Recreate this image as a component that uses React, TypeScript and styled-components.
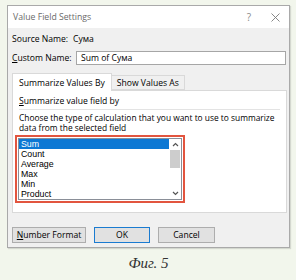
import styled, { createGlobalStyle } from 'styled-components';

const GlobalStyle = createGlobalStyle`
  body {
    margin: 0;
    background: #f2f6ec;
    font-family: 'Open Sans', 'Noto Sans', sans-serif;
  }
`;

const Page = styled.div`
  width: 296px;
  height: 280px;
  padding: 5px 0 0 7px;
  box-sizing: border-box;
`;

const Dialog = styled.div`
  width: 283px;
  border: 1px solid #a9a9a9;
  box-sizing: border-box;
  background: #f0f0f0;
  box-shadow: 1px 1px 1px rgba(0, 0, 0, 0.12);
`;

const TitleBar = styled.div`
  height: 22px;
  background: #ffffff;
  display: flex;
  align-items: center;
  padding: 0 0 0 5px;
  font-size: 8.7px;
  color: #6a6a6a;
`;

const Title = styled.span`
  flex: 1;
`;

const TitleGlyph = styled.span<{ width: number }>`
  width: ${(p) => p.width}px;
  display: flex;
  justify-content: center;
  color: #8a8a8a;
  font-size: 10px;
`;

const Body = styled.div`
  padding: 3px 3px 4px 4px;
  font-size: 8.6px;
  color: #000;
  white-space: nowrap;
`;

const Row = styled.div`
  height: 16px;
  display: flex;
  align-items: center;
  margin-bottom: 3px;
`;

const Label = styled.span<{ width: number }>`
  width: ${(p) => p.width}px;
  flex: none;
`;

const Input = styled.div`
  flex: 1;
  height: 14px;
  box-sizing: border-box;
  border: 1px solid #a6a6a6;
  background: #fff;
  display: flex;
  align-items: center;
  padding-left: 4px;
`;

const Tabs = styled.div`
  margin-top: 6px;
  height: 18px;
  display: flex;
  align-items: flex-end;
`;

const Tab = styled.div<{ active?: boolean }>`
  height: ${(p) => (p.active ? 18 : 15)}px;
  box-sizing: border-box;
  padding: 0 ${(p) => (p.active ? 6 : 5)}px;
  display: flex;
  align-items: center;
  background: ${(p) => (p.active ? '#ffffff' : '#f0f0f0')};
  border: 1px solid #d9d9d9;
  border-bottom: ${(p) => (p.active ? 'none' : '1px solid #d9d9d9')};
  margin-bottom: ${(p) => (p.active ? -1 : 0)}px;
  position: relative;
  z-index: ${(p) => (p.active ? 1 : 0)};
  & + & {
    border-left: none;
  }
`;

const Panel = styled.div`
  width: 275px;
  height: 123px;
  box-sizing: border-box;
  background: #fff;
  border: 1px solid #d9d9d9;
  padding: 5px 6px 0 6px;
`;

const Heading = styled.div`
  height: 11px;
  line-height: 11px;
  padding-bottom: 2px;
  border-bottom: 1px solid #e3e3e3;
`;

const Description = styled.div`
  margin-top: 3px;
  line-height: 10px;
  font-size: 8.4px;
`;

const Underlined = styled.span`
  text-decoration: underline;
`;

const Highlight = styled.div`
  margin: 2px 0 0 -4px;
  width: 170px;
  height: 68px;
  box-sizing: border-box;
  border: 2px solid #e2553f;
  padding: 1px;
  background: #fff;
`;

const ListBox = styled.div`
  height: 100%;
  box-sizing: border-box;
  border: 1px solid #8a8f98;
  display: flex;
  overflow: hidden;
`;

const Items = styled.div`
  flex: 1;
`;

const Item = styled.div<{ selected?: boolean }>`
  height: 10px;
  line-height: 10px;
  padding-left: 2px;
  font-family: 'Liberation Sans', sans-serif;
  font-size: 8.8px;
  background: ${(p) => (p.selected ? '#0c78d4' : 'transparent')};
  color: ${(p) => (p.selected ? '#ffffff' : '#000')};
`;

const ScrollBar = styled.div`
  width: 12px;
  display: flex;
  flex-direction: column;
  align-items: center;
  background: #fff;
`;

const Arrow = styled.div`
  height: 11px;
  display: flex;
  align-items: center;
  justify-content: center;
`;

const Thumb = styled.div`
  width: 10px;
  height: 18px;
  background: #cdcdcd;
`;

const Track = styled.div`
  flex: 1;
`;

const Footer = styled.div`
  margin-top: 14px;
  display: flex;
  align-items: center;
`;

const Button = styled.div<{ width: number; primary?: boolean }>`
  width: ${(p) => p.width}px;
  height: 16px;
  box-sizing: border-box;
  border: 1px solid ${(p) => (p.primary ? '#1a7bd0' : '#adadad')};
  background: #e1e1e1;
  display: flex;
  align-items: center;
  justify-content: center;
  font-size: 8.6px;
  margin-left: ${(p) => (p.primary ? 'auto' : '0')};
  & + & {
    margin-left: ${(p) => (p.primary ? 'auto' : '8px')};
  }
`;

const Caption = styled.div`
  text-align: center;
  width: 283px;
  margin-top: 7px;
  font-family: 'Liberation Serif', serif;
  font-style: italic;
  font-size: 15px;
  color: #333;
`;

const Chevron = ({ up }: { up?: boolean }) => (
  <svg width="7" height="5" viewBox="0 0 7 5">
    <path
      d={up ? 'M1 4 L3.5 1.5 L6 4' : 'M1 1 L3.5 3.5 L6 1'}
      fill="none"
      stroke="#555"
      strokeWidth="1.2"
    />
  </svg>
);

const CloseIcon = () => (
  <svg width="9" height="9" viewBox="0 0 9 9">
    <path d="M0.5 0.5 L8.5 8.5 M8.5 0.5 L0.5 8.5" stroke="#7a7a7a" strokeWidth="0.9" />
  </svg>
);

const items = ['Sum', 'Count', 'Average', 'Max', 'Min', 'Product'];

export default function App() {
  return (
    <Page>
      <GlobalStyle />
      <Dialog>
        <TitleBar>
          <Title>Value Field Settings</Title>
          <TitleGlyph width={26}>?</TitleGlyph>
          <TitleGlyph width={27}>
            <CloseIcon />
          </TitleGlyph>
        </TitleBar>
        <Body>
          <Row>
            <Label width={61}>Source Name:</Label>
            <span>Сума</span>
          </Row>
          <Row>
            <Label width={64}>
              <Underlined>C</Underlined>ustom Name:
            </Label>
            <Input>Sum of Сума</Input>
          </Row>
          <Tabs>
            <Tab active>Summarize Values By</Tab>
            <Tab>Show Values As</Tab>
          </Tabs>
          <Panel>
            <Heading>
              <Underlined>S</Underlined>ummarize value field by
            </Heading>
            <Description>
              Choose the type of calculation that you want to use to summarize
              <br />
              data from the selected field
            </Description>
            <Highlight>
              <ListBox>
                <Items>
                  {items.map((it, i) => (
                    <Item key={it} selected={i === 0}>
                      {it}
                    </Item>
                  ))}
                </Items>
                <ScrollBar>
                  <Arrow>
                    <Chevron up />
                  </Arrow>
                  <Thumb />
                  <Track />
                  <Arrow>
                    <Chevron />
                  </Arrow>
                </ScrollBar>
              </ListBox>
            </Highlight>
          </Panel>
          <Footer>
            <Button width={74}>
              <span>
                <Underlined>N</Underlined>umber Format
              </span>
            </Button>
            <Button width={56} primary>
              OK
            </Button>
            <Button width={57}>Cancel</Button>
          </Footer>
        </Body>
      </Dialog>
      <Caption>Фиг. 5</Caption>
    </Page>
  );
}
